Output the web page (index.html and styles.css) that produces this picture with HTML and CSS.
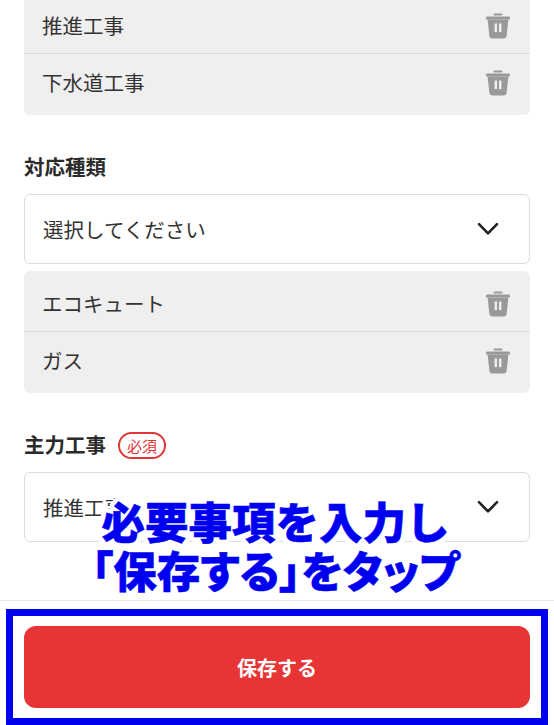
FILE: index.html
```html
<!DOCTYPE html>
<html lang="ja">
<head>
<meta charset="utf-8">
<title>対応工事の編集</title>
<link rel="stylesheet" href="styles.css">
</head>
<body>
<svg class="defs" width="0" height="0" aria-hidden="true">
  <symbol id="trash" viewBox="0 0 24 26">
    <rect x="7.5" y="0.4" width="9" height="2.2" rx="1" fill="#999"/>
    <rect x="0" y="3.6" width="24" height="3" rx="1.2" fill="#999"/>
    <path d="M1.6 6.5H22.4L20.6 23a2.6 2.6 0 0 1-2.6 2.4H6A2.6 2.6 0 0 1 3.4 23Z" fill="#999"/>
    <rect x="8.6" y="10.5" width="2.4" height="8.6" fill="#efefef"/>
    <rect x="13" y="10.5" width="2.4" height="8.6" fill="#efefef"/>
  </symbol>
  <symbol id="chevron" viewBox="0 0 22 14">
    <path d="M2 2.2L11 11.4L20 2.2" fill="none" stroke="#222" stroke-width="2.6" stroke-linecap="round" stroke-linejoin="round"/>
  </symbol>
</svg>
<div class="page">
  <main class="form">
    <ul class="list list-clipped">
      <li class="row"><span>推進工事</span><svg class="trash"><use href="#trash"/></svg></li>
      <li class="row"><span>下水道工事</span><svg class="trash"><use href="#trash"/></svg></li>
    </ul>

    <section class="section">
      <div class="label"><span class="label-text">対応種類</span></div>
      <div class="select"><span>選択してください</span><svg class="chevron"><use href="#chevron"/></svg></div>
      <ul class="list list-attached">
        <li class="row"><span>エコキュート</span><svg class="trash"><use href="#trash"/></svg></li>
        <li class="row"><span>ガス</span><svg class="trash"><use href="#trash"/></svg></li>
      </ul>
    </section>

    <section class="section">
      <div class="label"><span class="label-text">主力工事</span><span class="badge">必須</span></div>
      <div class="select"><span>推進工事</span><svg class="chevron"><use href="#chevron"/></svg></div>
    </section>
  </main>

  <footer class="footer">
    <button class="save" type="button">保存する</button>
    <div class="highlight"></div>
  </footer>

  <div class="caption">
    <div>必要事項を入力し</div>
    <div class="caption-second">「保存する」をタップ</div>
  </div>
</div>
</body>
</html>
```
FILE: styles.css
```css
* { box-sizing: border-box; }
html, body { margin: 0; padding: 0; background: #fff; }
body {
  font-family: "Noto Sans CJK JP", "Noto Sans", sans-serif;
  color: #333;
  font-size: 20.5px;
}
.defs { position: absolute; }
.page {
  position: relative;
  width: 554px;
  height: 725px;
  overflow: hidden;
}
.form { display: flow-root; padding: 0 24px; height: 600px; }
.list {
  list-style: none;
  margin: 0;
  padding: 6px 0 5px;
  background: #efefef;
  border-radius: 6px;
}
.list-clipped { margin-top: -7px; }
.list-attached { margin-top: 7px; }
.row {
  display: flex;
  align-items: center;
  justify-content: space-between;
  height: 55px;
  padding: 0 20px 0 18px;
  border-bottom: 1px solid #dcdcdc;
}
.row span { margin-bottom: 2px; }
.row + .row {
  height: 56px;
  padding-top: 2px;
  border-bottom: 0;
}
.trash { width: 24px; height: 26px; display: block; }
.section { margin-top: 37px; }
.label {
  display: flex;
  align-items: center;
  gap: 12px;
  height: 30px;
  margin-bottom: 12px;
  font-weight: 700;
  color: #2b2b2b;
}
.label-text { margin-bottom: 2px; }
.badge {
  display: flex;
  align-items: center;
  justify-content: center;
  width: 48px;
  height: 27px;
  border: 2px solid #e03535;
  border-radius: 14px;
  color: #e03535;
  font-size: 15px;
  font-weight: 400;
}
.select {
  display: flex;
  align-items: center;
  justify-content: space-between;
  height: 70px;
  padding: 0 30px 0 18px;
  border: 1px solid #ddd;
  border-radius: 6px;
  background: #fff;
}
.chevron { width: 22px; height: 14px; display: block; }
.footer {
  position: relative;
  height: 125px;
  padding: 25px 24px 0;
  border-top: 1px solid #e6e6e6;
}
.save {
  display: block;
  width: 100%;
  height: 82px;
  border: 0;
  border-radius: 12px;
  background: #e73434;
  color: #fff;
  font-family: inherit;
  font-size: 20px;
  font-weight: 700;
}
.highlight {
  position: absolute;
  left: 6px;
  top: 8px;
  width: 542px;
  height: 116px;
  border: 7px solid #0000ee;
}
.caption {
  position: absolute;
  left: 0;
  right: 0;
  top: 496px;
  padding-right: 3px;
  text-align: center;
  font-size: 43.5px;
  line-height: 49px;
  font-weight: 900;
  color: #0000f0;
  -webkit-text-stroke: 0.5px #0000f0;
  text-shadow:
    5px 0 0 #fff, -5px 0 0 #fff, 0 5px 0 #fff, 0 -5px 0 #fff,
    3.5px 3.5px 0 #fff, -3.5px 3.5px 0 #fff, 3.5px -3.5px 0 #fff, -3.5px -3.5px 0 #fff,
    4.5px 2px 0 #fff, -4.5px 2px 0 #fff, 4.5px -2px 0 #fff, -4.5px -2px 0 #fff,
    2px 4.5px 0 #fff, -2px 4.5px 0 #fff, 2px -4.5px 0 #fff, -2px -4.5px 0 #fff,
    2.5px 0 0 #fff, -2.5px 0 0 #fff, 0 2.5px 0 #fff, 0 -2.5px 0 #fff;
}
.caption-second { font-feature-settings: "palt"; }
```
